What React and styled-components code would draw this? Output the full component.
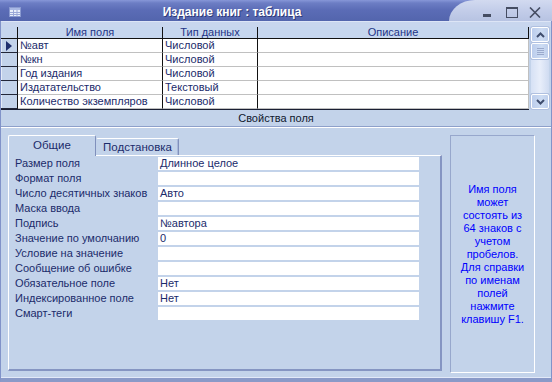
import React from 'react';
import styled, { createGlobalStyle } from 'styled-components';

const GlobalStyle = createGlobalStyle`
    html, body {
        margin: 0;
        padding: 0;
        overflow: hidden;
        background: #c3d3ea;
    }
    * {
        box-sizing: border-box;
    }
`;

const FONT = `"Liberation Sans", Arial, sans-serif`;
const BG = '#c3d3ea';
const INK = '#1b2b6b';

const Window = styled.div`
    width: 552px;
    height: 382px;
    display: flex;
    flex-direction: column;
    font-family: ${FONT};
    font-size: 11px;
    color: ${INK};
    background: ${BG};
`;

const TitleBar = styled.div`
    height: 21px;
    display: flex;
    align-items: stretch;
    background: linear-gradient(180deg, #8797d8 0, #6c7dc4 3px, #5b6cb6 10px, #5365ad 100%);
`;

const TitleIcon = styled.div`
    width: 21px;
    display: flex;
    align-items: center;
    justify-content: flex-end;
    padding-top: 2px;
`;

const Title = styled.div`
    flex: 1;
    text-align: center;
    line-height: 21px;
    padding-top: 2px;
    padding-right: 6px;
    color: #ffffff;
    font-weight: bold;
    font-size: 12px;
    text-shadow: 1px 1px 0 #2e3a78;
    white-space: nowrap;
`;

const Controls = styled.div`
    width: 103px;
    display: flex;
    align-items: center;
    justify-content: flex-end;
    padding: 3px 11px 0 0;
    background: linear-gradient(180deg, #d2daf0 0, #c3cde9 50%, #b7c3e2 100%);
    border-top-left-radius: 26px 21px;
`;

const ControlGlyph = styled.svg`
    display: block;
    margin-left: ${p => p.$gap || 0}px;
`;

const Body = styled.div`
    flex: 1;
    display: flex;
    flex-direction: column;
    border-left: 1px solid #8193c9;
    border-right: 1px solid #8193c9;
    border-bottom: 4px solid #8a9ac8;
    box-shadow: inset 0 -1px 0 #e2e9f8;
`;

const TopStrip = styled.div`
    height: 6px;
    border-top: 1px solid #dde5f6;
    background: #c8d6ee;
`;

const GridArea = styled.div`
    height: 83px;
    display: flex;
    padding-right: 2px;
`;

const Grid = styled.div`
    width: 528px;
    display: flex;
    flex-direction: column;
    background: #ffffff;
    border-bottom: 1px solid #1a1f33;
`;

const HeaderRow = styled.div`
    height: 12px;
    display: flex;
    background: #c6d6ee;
    border-bottom: 1px solid #111111;
`;

const HeadCell = styled.div`
    width: ${p => p.$w}px;
    flex: ${p => (p.$grow ? 1 : 'none')};
    border-right: 1px solid #111111;
    text-align: center;
    line-height: 11px;
    color: #1f3486;
    white-space: nowrap;
`;

const DataRow = styled.div`
    height: 14px;
    display: flex;
`;

const Selector = styled.div`
    width: 17px;
    display: flex;
    align-items: center;
    justify-content: center;
    background: ${BG};
    border-right: 1px solid #111111;
    border-bottom: 1px solid #222638;
    box-shadow: inset 1px 0 0 #e4ebf8;
`;

const Cell = styled.div`
    width: ${p => p.$w}px;
    flex: ${p => (p.$grow ? 1 : 'none')};
    padding-left: 2px;
    line-height: 13px;
    border-right: 1px solid ${p => (p.$dark ? '#111111' : '#c0c0c0')};
    border-bottom: 1px solid #c0c0c0;
    white-space: nowrap;
    overflow: hidden;
`;

const ScrollBar = styled.div`
    width: 18px;
    margin-left: 2px;
    display: flex;
    flex-direction: column;
    gap: 1px;
    padding-bottom: 1px;
`;

const ScrollButton = styled.div`
    height: ${p => p.$h}px;
    display: flex;
    align-items: center;
    justify-content: center;
    border: 1px solid #ffffff;
    border-radius: 2px;
    background: linear-gradient(90deg, #bccdec, #cddcf3 60%, #bfcfec);
    box-shadow: 0 0 0 1px #b0c0e0;
`;

const ScrollTrack = styled.div`
    flex: 1;
    background: linear-gradient(90deg, #d6e1f5, #e8eefa 50%, #cfdbf1);
`;

const SectionBar = styled.div`
    height: 18px;
    border-bottom: 1px solid #ffffff;
    box-shadow: inset 0 -1px 0 #8ea0ca;
    text-align: center;
    line-height: 17px;
    color: #10182e;
`;

const Lower = styled.div`
    flex: 1;
    display: flex;
    gap: 8px;
    padding: 7px 13px 0 7px;
`;

const TabControl = styled.div`
    width: 434px;
    height: 236px;
    display: flex;
    flex-direction: column;
`;

const Tabs = styled.div`
    height: 20px;
    display: flex;
    align-items: flex-end;
`;

const Tab = styled.div`
    width: ${p => p.$w}px;
    height: ${p => (p.$active ? 21 : 17)}px;
    margin-bottom: ${p => (p.$active ? -1 : 0)}px;
    position: relative;
    z-index: ${p => (p.$active ? 1 : 0)};
    background: ${BG};
    border-top: 1px solid #ffffff;
    border-left: 1px solid ${p => (p.$active ? '#ffffff' : BG)};
    border-right: 1px solid #8090bc;
    box-shadow: ${p => (p.$active ? 'none' : 'inset -1px 0 0 #a8b8da')};
    border-top-left-radius: 2px;
    border-top-right-radius: 2px;
    text-align: center;
    line-height: ${p => (p.$active ? 19 : 16)}px;
    font-size: 11.5px;
    color: #1b2b6b;
`;

const TabPanel = styled.div`
    flex: 1;
    border-top: 1px solid #ffffff;
    border-left: 1px solid #ffffff;
    border-right: 2px solid #8595c2;
    border-bottom: 2px solid #8595c2;
    padding: 1px 0 0 6px;
    display: grid;
    grid-template-columns: 143px 261px;
    grid-auto-rows: 13px;
    row-gap: 2px;
    align-content: start;
`;

const PropLabel = styled.div`
    line-height: 13px;
    white-space: nowrap;
`;

const PropValue = styled.div`
    background: #ffffff;
    padding-left: 2px;
    line-height: 13px;
    white-space: nowrap;
`;

const HelpBox = styled.div`
    width: 85px;
    height: 238px;
    display: flex;
    align-items: center;
    justify-content: center;
    border-top: 1px solid #97a7cc;
    border-left: 1px solid #97a7cc;
    border-right: 1px solid #ffffff;
    border-bottom: 1px solid #ffffff;
    text-align: center;
    line-height: 13px;
    color: #0000ff;
`;

const fields = [
    ['№авт', 'Числовой'],
    ['№кн', 'Числовой'],
    ['Год издания', 'Числовой'],
    ['Издатательство', 'Текстовый'],
    ['Количество экземпляров', 'Числовой'],
];

const props = [
    ['Размер поля', 'Длинное целое'],
    ['Формат поля', ''],
    ['Число десятичных знаков', 'Авто'],
    ['Маска ввода', ''],
    ['Подпись', '№автора'],
    ['Значение по умолчанию', '0'],
    ['Условие на значение', ''],
    ['Сообщение об ошибке', ''],
    ['Обязательное поле', 'Нет'],
    ['Индексированное поле', 'Нет'],
    ['Смарт-теги', ''],
];

const helpLines = [
    'Имя поля', 'может', 'состоять из', '64 знаков с', 'учетом', 'пробелов.',
    'Для справки', 'по именам', 'полей', 'нажмите', 'клавишу F1.',
];

function TableIcon() {
    return (
        <svg width="12" height="10" viewBox="0 0 12 10">
            <rect x="0.5" y="0.5" width="11" height="9" fill="#e8eefa" stroke="#8a9ad0" />
            <rect x="1" y="1" width="10" height="2" fill="#a9b8e4" />
            <path d="M1 5.5H11M1 7.5H11M4.5 3V9M8 3V9" stroke="#9aa8d8" strokeWidth="1" />
        </svg>
    );
}

function Chevron({ up }) {
    return (
        <svg width="9" height="6" viewBox="0 0 9 6">
            <polyline
                points={up ? '1,5 4.5,1.5 8,5' : '1,1 4.5,4.5 8,1'}
                fill="none"
                stroke="#3f4d6e"
                strokeWidth="2"
            />
        </svg>
    );
}

export default function App() {
    return (
        <Window>
            <GlobalStyle />
            <TitleBar>
                <TitleIcon><TableIcon /></TitleIcon>
                <Title>Издание книг : таблица</Title>
                <Controls>
                    <ControlGlyph width="8" height="12" viewBox="0 0 8 12">
                        <rect x="0" y="8" width="8" height="3" fill="#454d62" />
                    </ControlGlyph>
                    <ControlGlyph $gap={15} width="12" height="11" viewBox="0 0 12 11">
                        <rect x="0.5" y="0.5" width="11" height="10" fill="none" stroke="#454d62" />
                        <rect x="0" y="0" width="12" height="2" fill="#454d62" />
                    </ControlGlyph>
                    <ControlGlyph $gap={11} width="12" height="11" viewBox="0 0 12 11">
                        <path d="M1 0.5L11 10.5M11 0.5L1 10.5" stroke="#454d62" strokeWidth="1.6" />
                    </ControlGlyph>
                </Controls>
            </TitleBar>
            <Body>
                <TopStrip />
                <GridArea>
                    <Grid>
                        <HeaderRow>
                            <HeadCell $w={17} />
                            <HeadCell $w={145}>Имя поля</HeadCell>
                            <HeadCell $w={95}>Тип данных</HeadCell>
                            <HeadCell $grow>Описание</HeadCell>
                        </HeaderRow>
                        {fields.map(([name, type], i) => (
                            <DataRow key={name}>
                                <Selector>
                                    {i === 0 && (
                                        <svg width="6" height="10" viewBox="0 0 6 10">
                                            <polygon points="0,0 6,5 0,10" fill="#1f2f6e" />
                                        </svg>
                                    )}
                                </Selector>
                                <Cell $w={145} $dark>{name}</Cell>
                                <Cell $w={95} $dark>{type}</Cell>
                                <Cell $grow />
                            </DataRow>
                        ))}
                    </Grid>
                    <ScrollBar>
                        <ScrollButton $h={15}><Chevron up /></ScrollButton>
                        <ScrollButton $h={16}>
                            <svg width="7" height="7" viewBox="0 0 7 7">
                                <path d="M0 0.5H7M0 2.5H7M0 4.5H7M0 6.5H7" stroke="#9aa9cc" strokeWidth="1" />
                            </svg>
                        </ScrollButton>
                        <ScrollTrack />
                        <ScrollButton $h={15}><Chevron /></ScrollButton>
                    </ScrollBar>
                </GridArea>
                <SectionBar>Свойства поля</SectionBar>
                <Lower>
                    <TabControl>
                        <Tabs>
                            <Tab $w={88} $active>Общие</Tab>
                            <Tab $w={83}>Подстановка</Tab>
                        </Tabs>
                        <TabPanel>
                            {props.map(([label, value]) => (
                                <React.Fragment key={label}>
                                    <PropLabel>{label}</PropLabel>
                                    <PropValue>{value}</PropValue>
                                </React.Fragment>
                            ))}
                        </TabPanel>
                    </TabControl>
                    <HelpBox>
                        <div>
                            {helpLines.map(line => <div key={line}>{line}</div>)}
                        </div>
                    </HelpBox>
                </Lower>
            </Body>
        </Window>
    );
}
